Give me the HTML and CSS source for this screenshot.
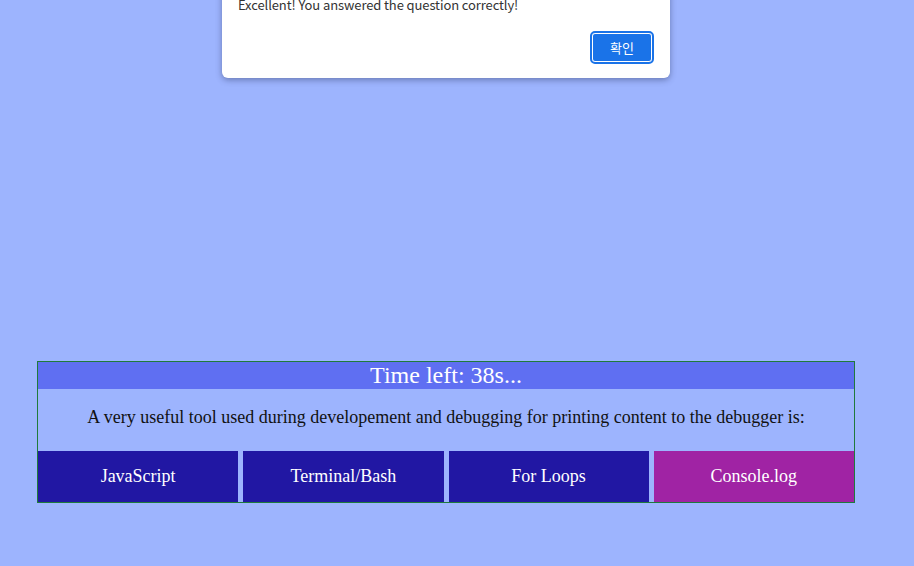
FILE: index.html
```html
<!DOCTYPE html>
<html>
<head>
<meta charset="utf-8">
<link rel="stylesheet" href="styles.css">
</head>
<body>
<div class="dialog">
  <div class="msg">Excellent! You answered the question correctly!</div>
  <div class="actions"><button class="ok">확인</button></div>
</div>
<main class="quiz">
  <div class="timer">Time left: 38s...</div>
  <p class="question">A very useful tool used during developement and debugging for printing content to the debugger is:</p>
  <div class="answers">
    <button class="ans">JavaScript</button>
    <button class="ans">Terminal/Bash</button>
    <button class="ans">For Loops</button>
    <button class="ans correct">Console.log</button>
  </div>
</main>
</body>
</html>
```
FILE: styles.css
```css
html, body {
  margin: 0;
  padding: 0;
}
body {
  background: #9db4fe;
  width: 914px;
  height: 566px;
  overflow: hidden;
  position: relative;
  font-family: "Liberation Serif", "Times New Roman", serif;
}
.quiz {
  margin: 361px 0 0 37px;
  width: 816px;
  border: 1px solid #1f7a3c;
  display: flex;
  flex-direction: column;
}
.timer {
  background: #5f6ff2;
  color: #fff;
  text-align: center;
  font-size: 24px;
  height: 27px;
  line-height: 27px;
}
.question {
  margin: 0;
  height: 62px;
  display: flex;
  align-items: center;
  justify-content: center;
  font-size: 18px;
  color: #111;
  padding-bottom: 5px;
  box-sizing: border-box;
}
.answers {
  display: grid;
  grid-template-columns: repeat(4, 1fr);
  column-gap: 5px;
}
.ans {
  height: 51px;
  border: none;
  margin: 0;
  padding: 0;
  background: #2117a3;
  color: #fff;
  font-family: "Liberation Serif", "Times New Roman", serif;
  font-size: 18px;
}
.ans.correct {
  background: #a023a4;
}
.dialog {
  position: absolute;
  left: 222px;
  top: -20px;
  width: 448px;
  height: 98px;
  background: #fff;
  border-radius: 0 0 6px 6px;
  box-shadow: 0 2px 6px rgba(40, 50, 90, 0.45);
  box-sizing: border-box;
  padding: 16px 16px 16px 16px;
  font-family: "Noto Sans CJK KR", "Noto Sans", sans-serif;
  display: flex;
  flex-direction: column;
}
.msg {
  font-size: 13px;
  color: #333;
  line-height: 16px;
  margin-top: 1px;
  letter-spacing: -0.1px;
}
.actions {
  margin-top: auto;
  display: flex;
  justify-content: flex-end;
}
.ok {
  width: 60px;
  height: 29px;
  border-radius: 3px;
  background: #1a73e8;
  color: #fff;
  border: 1px solid #fff;
  outline: 2px solid #1a73e8;
  outline-offset: 0;
  font-family: "Noto Sans CJK KR", sans-serif;
  font-size: 13px;
  padding: 0;
  margin: 0 2px 0 0;
}
```
